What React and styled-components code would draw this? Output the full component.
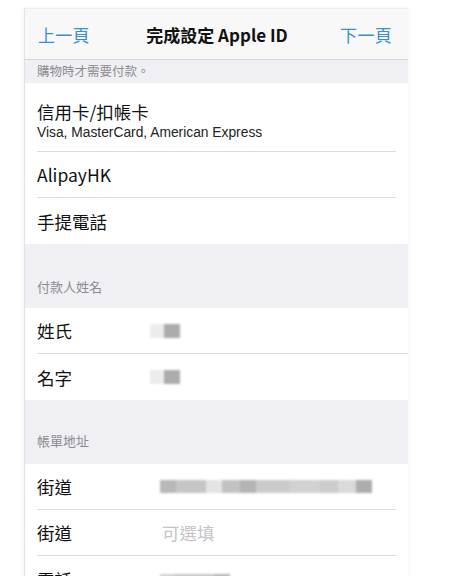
import React from "react";
import styled, { createGlobalStyle } from "styled-components";

const Global = createGlobalStyle`
  html, body { margin: 0; padding: 0; background: #fff; }
  body { font-family: "Noto Sans CJK TC", "Noto Sans", sans-serif; }
`;

const Page = styled.div`
  width: 455px;
  height: 576px;
  overflow: hidden;
  padding: 8px 0 0 24px;
  box-sizing: border-box;
  background: #fff;
`;

const Phone = styled.div`
  width: 383px;
  background: #efeff4;
  border-left: 1px solid #e2e2e6;
  border-top: 1px solid #ececee;
  box-shadow: -2px 0 4px rgba(0, 0, 0, 0.04), 2px 0 4px rgba(0, 0, 0, 0.03);
`;

const NavBar = styled.div`
  height: 50px;
  background: #f8f8f8;
  border-bottom: 1px solid #d4d4d8;
  display: flex;
  align-items: center;
  justify-content: space-between;
  padding: 0 16px 0 13px;
`;

const NavButton = styled.span`
  color: #3b8ed6;
  font-size: 17px;
  letter-spacing: 0.3px;
`;

const NavTitle = styled.span`
  color: #111;
  font-size: 17px;
  font-weight: 700;
  margin-left: 4px;
`;

const SectionHeader = styled.div`
  height: ${(p) => p.$h}px;
  display: flex;
  align-items: flex-end;
  padding: 0 0 ${(p) => p.$pb}px 12px;
  box-sizing: border-box;
  color: #8b8b90;
  font-size: ${(p) => p.$fs || 13}px;
`;

const Group = styled.div`
  background: #fff;
`;

const Row = styled.div`
  height: ${(p) => p.$h || 46}px;
  display: flex;
  align-items: center;
  margin-left: 12px;
  margin-right: ${(p) => (p.$full ? 0 : 12)}px;
  border-bottom: ${(p) => (p.$last ? "none" : "1px solid #dcdce0")};
  box-sizing: border-box;
`;

const Stack = styled.div`
  display: flex;
  flex-direction: column;
  padding-top: 4px;
`;

const Label = styled.span`
  color: #111;
  font-size: 17.5px;
  width: ${(p) => (p.$w ? p.$w + "px" : "auto")};
  flex-shrink: 0;
`;

const Sub = styled.span`
  color: #222;
  font-family: "Liberation Sans", "Noto Sans", sans-serif;
  font-size: 13.8px;
  margin-top: 1px;
`;

const Placeholder = styled.span`
  color: #c4c4c8;
  font-size: 17.5px;
`;

const Blur = styled.span`
  display: flex;
  height: ${(p) => p.$h || 14}px;
  filter: blur(1px);
`;

const Cell = styled.span`
  width: ${(p) => p.$w}px;
  background: ${(p) => p.$c};
`;

const blocksName = [
  [14, "#ececec"],
  [16, "#acacac"],
];
const blocksStreet = [
  [16, "#b8b8b8"],
  [30, "#c6c6c6"],
  [16, "#e4e4e4"],
  [18, "#c2c2c2"],
  [16, "#b4b4b4"],
  [34, "#cbcbcb"],
  [30, "#d2d2d2"],
  [18, "#cccccc"],
  [18, "#dadada"],
  [16, "#adadad"],
];
const blocksPhone = [
  [14, "#d2d2d2"],
  [40, "#c8c8c8"],
  [16, "#b8b8b8"],
];

const Blocks = ({ items, h }) => (
  <Blur $h={h}>
    {items.map(([w, c], i) => (
      <Cell key={i} $w={w} $c={c} />
    ))}
  </Blur>
);

export default function App() {
  return (
    <Page>
      <Global />
      <Phone>
        <NavBar>
          <NavButton>上一頁</NavButton>
          <NavTitle>完成設定 Apple ID</NavTitle>
          <NavButton>下一頁</NavButton>
        </NavBar>
        <SectionHeader $h={23} $pb={3} $fs={12.5}>
          購物時才需要付款。
        </SectionHeader>
        <Group>
          <Row $h={69}>
            <Stack>
              <Label>信用卡/扣帳卡</Label>
              <Sub>Visa, MasterCard, American Express</Sub>
            </Stack>
          </Row>
          <Row>
            <Label>AlipayHK</Label>
          </Row>
          <Row $last>
            <Label>手提電話</Label>
          </Row>
        </Group>
        <SectionHeader $h={64} $pb={12}>
          付款人姓名
        </SectionHeader>
        <Group>
          <Row $full>
            <Label $w={113}>姓氏</Label>
            <Blocks items={blocksName} />
          </Row>
          <Row $full $last>
            <Label $w={113}>名字</Label>
            <Blocks items={blocksName} />
          </Row>
        </Group>
        <SectionHeader $h={64} $pb={14}>
          帳單地址
        </SectionHeader>
        <Group>
          <Row>
            <Label $w={123}>街道</Label>
            <Blocks items={blocksStreet} h={13} />
          </Row>
          <Row>
            <Label $w={125}>街道</Label>
            <Placeholder>可選填</Placeholder>
          </Row>
          <Row $last>
            <Label $w={123}>電話</Label>
            <Blocks items={blocksPhone} h={10} />
          </Row>
        </Group>
      </Phone>
    </Page>
  );
}
